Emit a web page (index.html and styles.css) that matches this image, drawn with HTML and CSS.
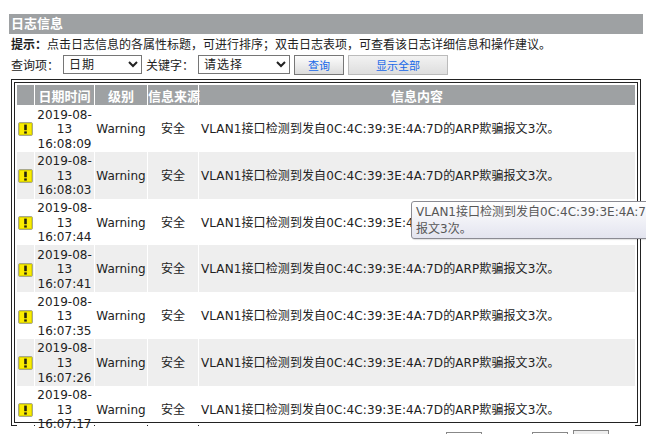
FILE: index.html
```html
<!DOCTYPE html>
<html lang="zh-CN">
<head>
<meta charset="utf-8">
<title>日志信息</title>
<link rel="stylesheet" href="styles.css">
</head>
<body>
<svg class="defs" width="0" height="0" aria-hidden="true">
  <symbol id="warn" viewBox="0 0 15 14">
    <rect x="0.5" y="0.5" width="14" height="13" rx="1.5" fill="#fbec00" stroke="#a9a98c"/>
    <rect x="1.5" y="1.5" width="12" height="11" fill="none" stroke="#dcd400"/>
    <rect x="6.2" y="2.6" width="2.6" height="5.6" fill="#262410"/>
    <rect x="6.2" y="9.4" width="2.6" height="2.2" fill="#262410"/>
  </symbol>
</svg>
<main class="page">
  <h1 class="title">日志信息</h1>
  <p class="hint"><b>提示：</b>点击日志信息的各属性标题，可进行排序；双击日志表项，可查看该日志详细信息和操作建议。</p>
  <div class="controls">
    <label class="lbl">查询项：</label>
    <select class="sel sel-a"><option>日期</option></select>
    <label class="lbl">关键字：</label>
    <select class="sel sel-b"><option>请选择</option></select>
    <button class="btn btn-q">查询</button>
    <button class="btn btn-all">显示全部</button>
  </div>
  <div class="frame">
    <div class="scroller">
      <table class="log">
        <colgroup><col class="c0"><col class="c1"><col class="c2"><col class="c3"><col></colgroup>
        <thead>
          <tr><th></th><th>日期时间</th><th>级别</th><th>信息来源</th><th>信息内容</th></tr>
        </thead>
        <tbody>
          <tr><td><svg class="ico"><use href="#warn"/></svg></td><td>2019-08-13 16:08:09</td><td>Warning</td><td>安全</td><td class="msg">VLAN1接口检测到发自0C:4C:39:3E:4A:7D的ARP欺骗报文3次。</td></tr>
          <tr><td><svg class="ico"><use href="#warn"/></svg></td><td>2019-08-13 16:08:03</td><td>Warning</td><td>安全</td><td class="msg">VLAN1接口检测到发自0C:4C:39:3E:4A:7D的ARP欺骗报文3次。</td></tr>
          <tr><td><svg class="ico"><use href="#warn"/></svg></td><td>2019-08-13 16:07:44</td><td>Warning</td><td>安全</td><td class="msg">VLAN1接口检测到发自0C:4C:39:3E:4A:7D的ARP欺骗报文3次。</td></tr>
          <tr><td><svg class="ico"><use href="#warn"/></svg></td><td>2019-08-13 16:07:41</td><td>Warning</td><td>安全</td><td class="msg">VLAN1接口检测到发自0C:4C:39:3E:4A:7D的ARP欺骗报文3次。</td></tr>
          <tr><td><svg class="ico"><use href="#warn"/></svg></td><td>2019-08-13 16:07:35</td><td>Warning</td><td>安全</td><td class="msg">VLAN1接口检测到发自0C:4C:39:3E:4A:7D的ARP欺骗报文3次。</td></tr>
          <tr><td><svg class="ico"><use href="#warn"/></svg></td><td>2019-08-13 16:07:26</td><td>Warning</td><td>安全</td><td class="msg">VLAN1接口检测到发自0C:4C:39:3E:4A:7D的ARP欺骗报文3次。</td></tr>
          <tr><td><svg class="ico"><use href="#warn"/></svg></td><td>2019-08-13 16:07:17</td><td>Warning</td><td>安全</td><td class="msg">VLAN1接口检测到发自0C:4C:39:3E:4A:7D的ARP欺骗报文3次。</td></tr>
        </tbody>
      </table>
    </div>
  </div>
  <div class="pager">
    <button class="pg pg-a"></button>
    <button class="pg pg-b"></button>
    <button class="pg pg-c"></button>
  </div>
  <div class="tip">VLAN1接口检测到发自0C:4C:39:3E:4A:7D的ARP欺骗<br>报文3次。</div>
</main>
</body>
</html>
```
FILE: styles.css
```css
html, body {
  margin: 0;
  padding: 0;
  height: 100%;
  overflow: hidden;
  background: #fff;
}
body {
  font-family: "DejaVu Sans", "Noto Sans CJK SC", sans-serif;
  font-size: 12px;
  color: #222;
}
.defs { position: absolute; }
.page {
  position: relative;
  height: 434px;
  overflow: hidden;
  padding: 14px 3px 0 9px;
  box-sizing: border-box;
}
.title {
  margin: 0;
  height: 20px;
  line-height: 20px;
  padding-left: 2px;
  background: #9ea1a3;
  color: #fff;
  font-size: 13px;
  font-weight: bold;
}
.hint {
  margin: 0;
  padding: 3px 0 0 2px;
  height: 19px;
  line-height: 17px;
  box-sizing: border-box;
  white-space: nowrap;
}
.controls {
  display: flex;
  align-items: center;
  height: 21px;
  margin-top: 1px;
  padding-left: 2px;
}
.lbl { white-space: nowrap; width: 48px; flex: none; }
.sel {
  height: 19px;
  font-family: inherit;
  font-size: 12px;
  letter-spacing: 1px;
  background: #fff;
  border: 1px solid #767676;
  padding: 0 0 0 1px;
  color: #222;
  box-sizing: border-box;
  flex: none;
}
.sel-a { width: 79px; margin: 0 4px; }
.sel-b { width: 92px; margin: 0 4px; }
.btn {
  height: 20px;
  padding: 0;
  font-family: inherit;
  font-size: 11px;
  color: #1668e8;
  box-sizing: border-box;
  flex: none;
}
.btn-q {
  width: 50px;
  border: 1px solid #777;
  background: linear-gradient(#fdfdfd, #dcdcdc);
}
.btn-all {
  width: 100px;
  margin-left: 4px;
  border: 1px solid #bbb;
  background: linear-gradient(#f2f2f2, #dedede);
}
/* Outer rule of the double frame. It stops at 347px; the last row runs past it. */
.frame {
  width: 630px;
  height: 350px;
  margin: 4px 0 0 2px;
  padding: 3px 3px 0;
  box-sizing: border-box;
  overflow: hidden;
  background:
    linear-gradient(#222, #222) 0 0 / 100% 1px no-repeat,
    linear-gradient(#222, #222) 0 0 / 1px 347px no-repeat,
    linear-gradient(#222, #222) 100% 0 / 1px 347px no-repeat,
    linear-gradient(#222, #222) 0 346px / 100% 1px no-repeat,
    #fff;
}
.scroller {
  position: relative;
  height: 341px;
  border: 1px solid #222;
  border-bottom: 0;
  padding: 2px 1px 0 2px;
  box-sizing: border-box;
}
.scroller::after {
  content: "";
  position: absolute;
  left: -1px;
  right: -1px;
  bottom: 0;
  height: 1px;
  background: #222;
}
.log {
  width: 618px;
  border-collapse: separate;
  border-spacing: 0;
  table-layout: fixed;
}
.c0 { width: 18px; }
.c1 { width: 60px; }
.c2 { width: 53px; }
.c3 { width: 51px; }
.log th {
  height: 20px;
  padding: 0;
  background: #9ea1a3;
  background-clip: padding-box;
  color: #fff;
  font-size: 13px;
  font-weight: bold;
  text-align: center;
  border-right: 1px solid transparent;
  white-space: nowrap;
}
.log th:last-child { border-right: 0; }
.log td {
  height: 46.8px;
  padding: 2px 0 0;
  line-height: 14.6px;
  text-align: center;
  background: #fff;
  background-clip: padding-box;
  border-right: 1px solid transparent;
  box-sizing: border-box;
}
.log td:last-child { border-right: 0; }
.log td.msg {
  text-align: left;
  padding-left: 2px;
  white-space: nowrap;
  letter-spacing: 0.1px;
}
.log tbody tr:nth-child(even) td { background-color: #eeeeee; }
.ico { display: block; width: 15px; height: 14px; margin: 0 0 0 1px; }
.pager {
  display: flex;
  align-items: flex-start;
  height: 5px;
  padding-left: 437px;
}
.pg {
  height: 20px;
  width: 36px;
  padding: 0;
  margin-top: 3px;
  background: #fff;
  border: 1px solid #888;
  box-sizing: border-box;
  flex: none;
}
.pg-b { margin-left: 50px; }
.pg-c { margin-left: 5px; margin-top: 1px; background: #eeeeee; }
.tip {
  position: absolute;
  z-index: 2;
  left: 411px;
  top: 201px;
  width: 250px;
  height: 38px;
  box-sizing: border-box;
  padding: 2px 4px;
  line-height: 17px;
  font-size: 12px;
  color: #575757;
  white-space: nowrap;
  border: 1px solid #8b8b93;
  border-radius: 3px;
  background: linear-gradient(#ffffff, #e3e4ef);
  box-shadow: 1px 1px 1px rgba(0, 0, 0, 0.12);
}
```
